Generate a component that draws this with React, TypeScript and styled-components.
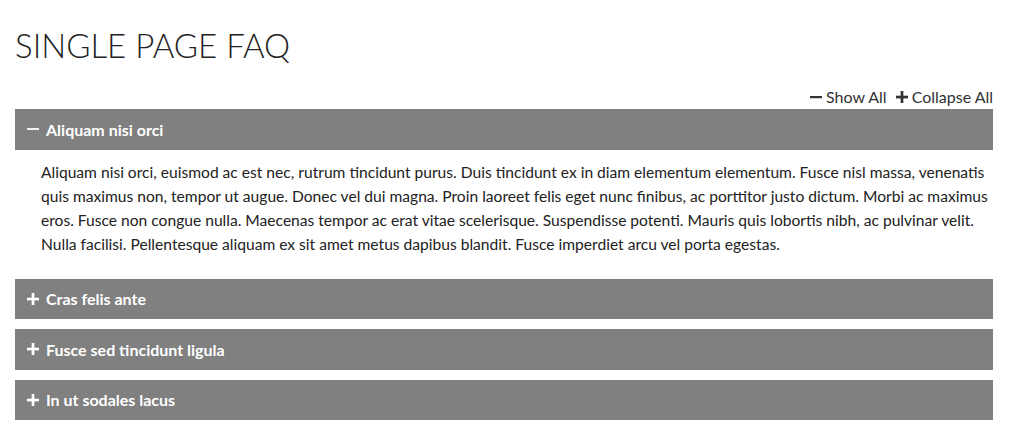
import React, { useState } from "react";
import styled, { createGlobalStyle } from "styled-components";

const Global = createGlobalStyle`
  html, body { margin: 0; padding: 0; background: #fff; }
  body { font-family: Lato, "Noto Sans", sans-serif; color: #222; }
`;

const Page = styled.div`
  padding: 0 18px 0 15px;
`;

const Title = styled.h1`
  margin: 0;
  padding-top: 24px;
  font-weight: 300;
  font-size: 33px;
  line-height: 42px;
  color: #222;
  letter-spacing: 0;
`;

const Controls = styled.div`
  display: flex;
  justify-content: flex-end;
  gap: 9px;
  margin-top: 20px;
  margin-bottom: 2px;
  height: 21px;
  align-items: center;
  font-size: 16px;
  color: #333;
`;

const ControlLink = styled.span`
  display: inline-flex;
  align-items: center;
  gap: 4px;
  cursor: pointer;
`;

const List = styled.div`
  display: flex;
  flex-direction: column;
  gap: 10px;
`;

const Item = styled.div``;

const Header = styled.div`
  display: flex;
  align-items: center;
  gap: 7px;
  height: 40.5px;
  padding-left: 12px;
  background: #808080;
  color: #fff;
  font-weight: 700;
  font-size: 16px;
  cursor: pointer;
`;

const Body = styled.div`
  padding: 10px 0 12px 26px;
  font-size: 15.6px;
  line-height: 24.3px;
  color: #222;
`;

const Icon = ({ open, size = 12, color = "#fff", thin = false }: { open: boolean; size?: number; color?: string; thin?: boolean }) => (
  <svg width={size} height={size} viewBox="0 0 12 12">
    {open ? (
      <rect x="0" y={thin ? 5.1 : 5} width="12" height={thin ? 1.8 : 2.2} fill={color} />
    ) : (
      <>
        <rect x="0" y="4.7" width="12" height="2.7" fill={color} />
        <rect x="4.65" y="0" width="2.7" height="12" fill={color} />
      </>
    )}
  </svg>
);

const faqs = [
  {
    q: "Aliquam nisi orci",
    a: "Aliquam nisi orci, euismod ac est nec, rutrum tincidunt purus. Duis tincidunt ex in diam elementum elementum. Fusce nisl massa, venenatis quis maximus non, tempor ut augue. Donec vel dui magna. Proin laoreet felis eget nunc finibus, ac porttitor justo dictum. Morbi ac maximus eros. Fusce non congue nulla. Maecenas tempor ac erat vitae scelerisque. Suspendisse potenti. Mauris quis lobortis nibh, ac pulvinar velit. Nulla facilisi. Pellentesque aliquam ex sit amet metus dapibus blandit. Fusce imperdiet arcu vel porta egestas.",
  },
  { q: "Cras felis ante", a: "Cras felis ante, lorem ipsum dolor sit amet." },
  { q: "Fusce sed tincidunt ligula", a: "Fusce sed tincidunt ligula, lorem ipsum dolor sit amet." },
  { q: "In ut sodales lacus", a: "In ut sodales lacus, lorem ipsum dolor sit amet." },
];

export default function App() {
  const [open, setOpen] = useState<boolean[]>([true, false, false, false]);
  const toggle = (i: number) => setOpen((o) => o.map((v, j) => (j === i ? !v : v)));
  return (
    <Page>
      <Global />
      <Title>SINGLE PAGE FAQ</Title>
      <Controls>
        <ControlLink onClick={() => setOpen(open.map(() => true))}>
          <Icon open size={12} color="#333" />
          Show All
        </ControlLink>
        <ControlLink onClick={() => setOpen(open.map(() => false))}>
          <Icon open={false} size={12} color="#333" />
          Collapse All
        </ControlLink>
      </Controls>
      <List>
        {faqs.map((f, i) => (
          <Item key={f.q}>
            <Header onClick={() => toggle(i)}>
              <Icon open={open[i]} thin />
              {f.q}
            </Header>
            {open[i] && <Body>{f.a}</Body>}
          </Item>
        ))}
      </List>
    </Page>
  );
}
